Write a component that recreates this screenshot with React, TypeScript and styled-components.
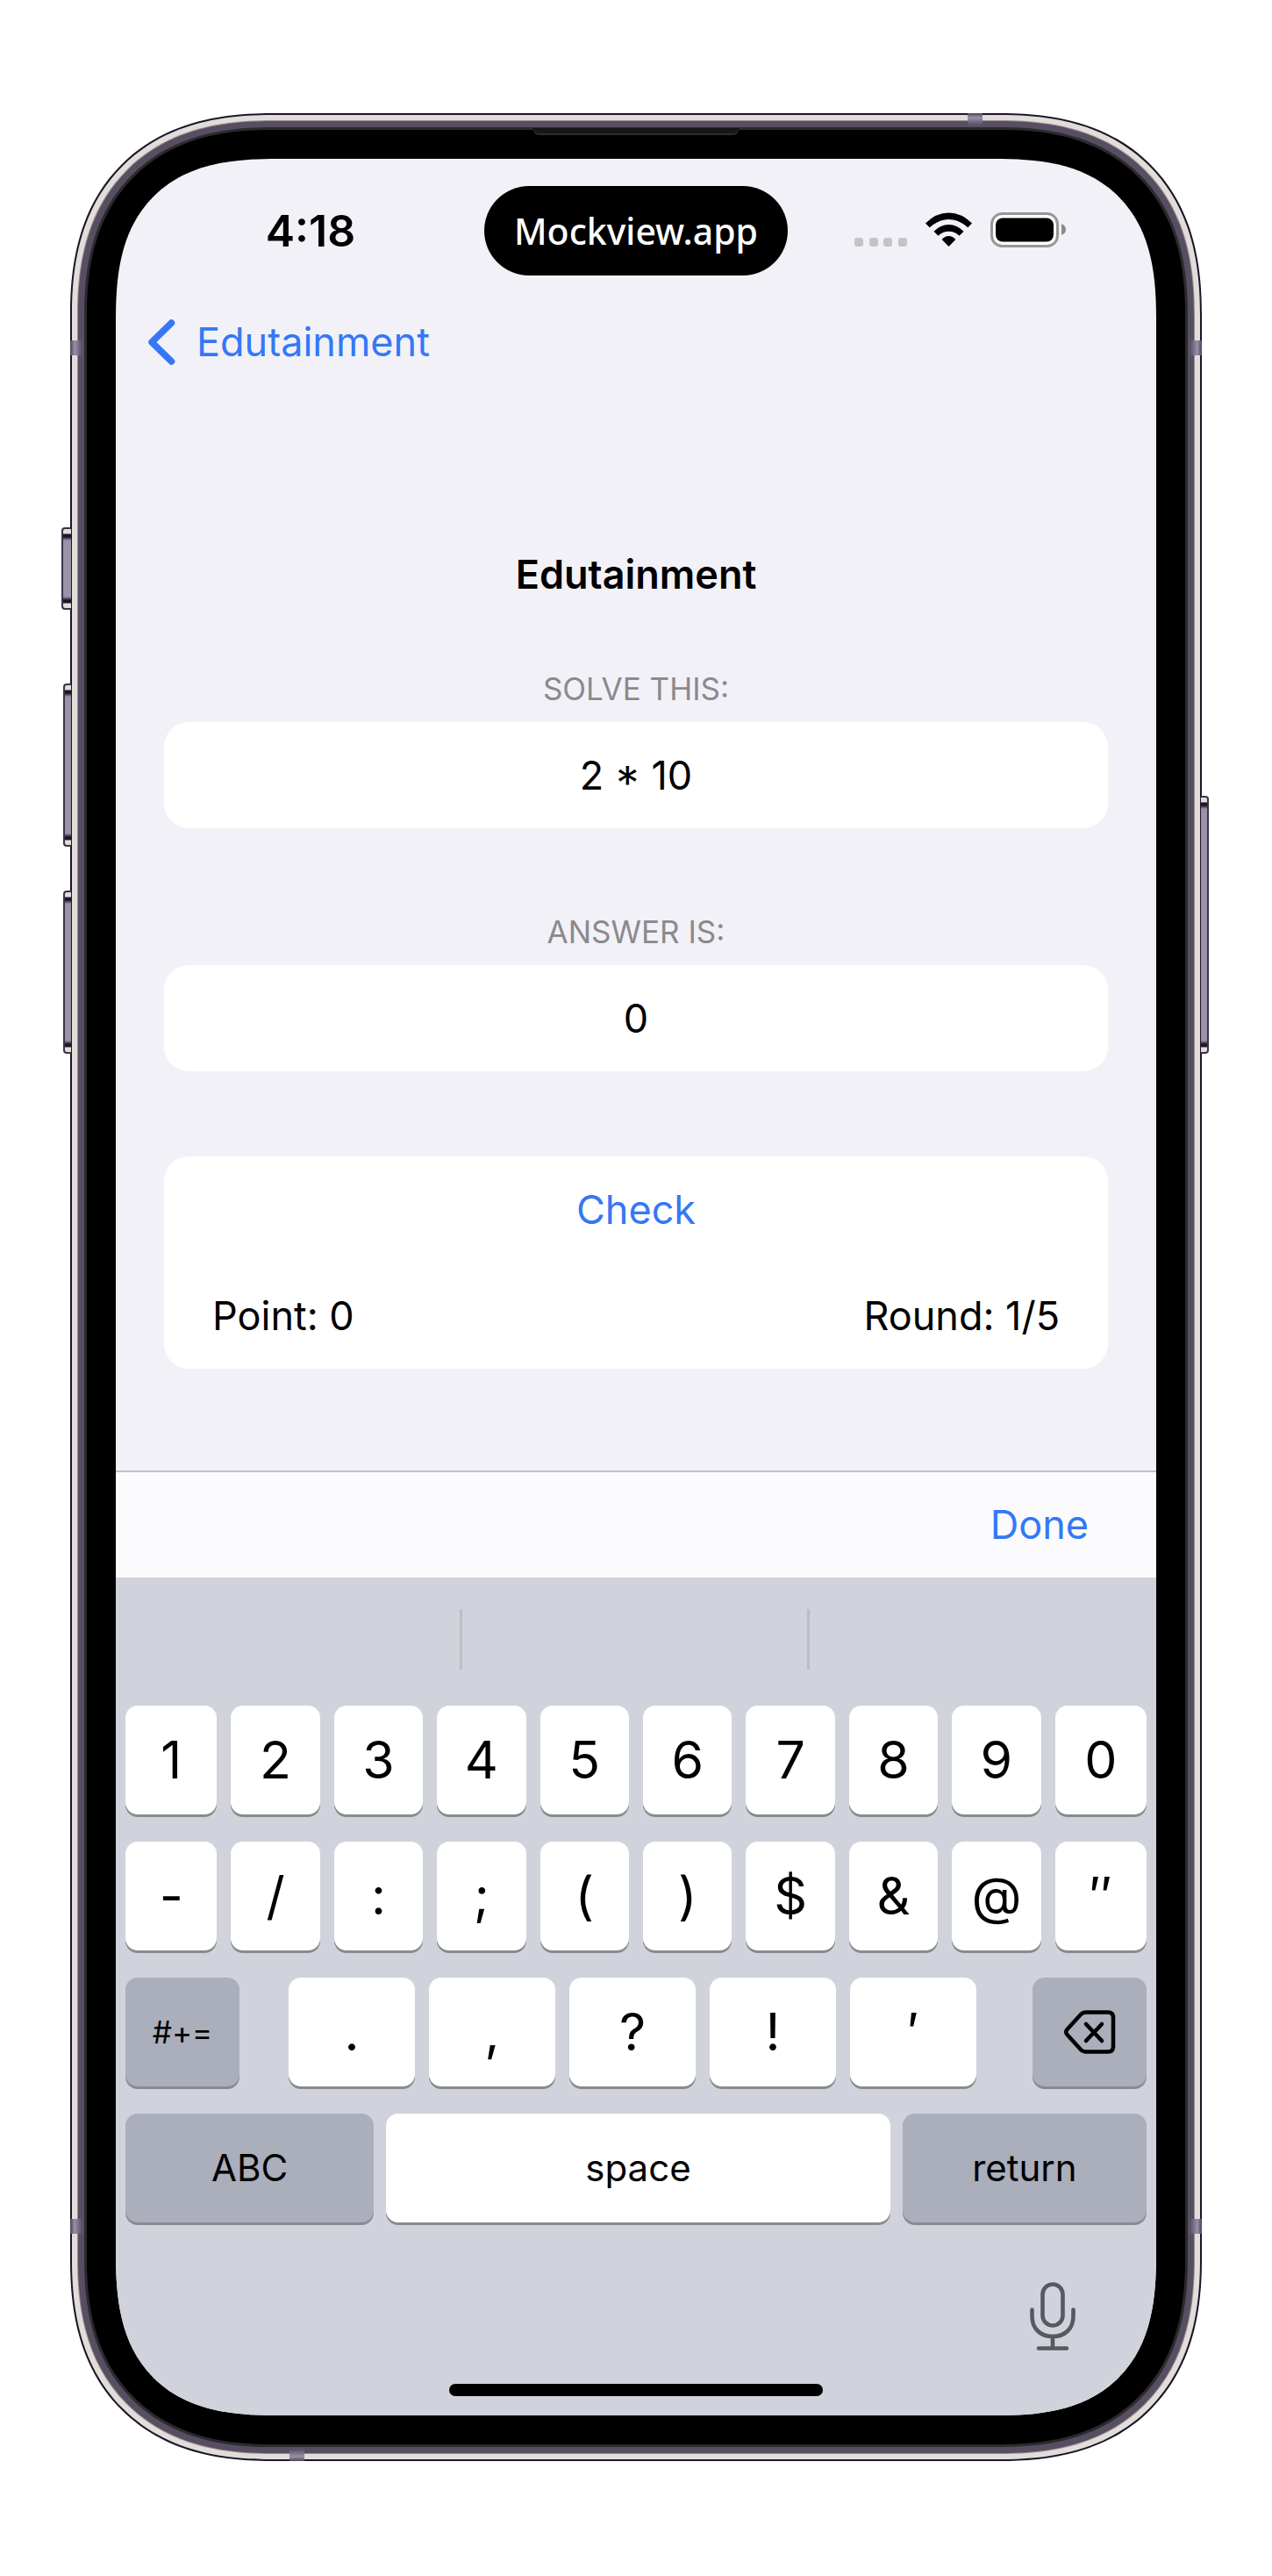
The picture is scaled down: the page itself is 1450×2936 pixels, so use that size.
import React, { useState } from "react";
import styled, { createGlobalStyle, css } from "styled-components";

const GlobalStyle = createGlobalStyle`
  *, *::before, *::after { box-sizing: border-box; }
  body {
    margin: 0;
    background: #ffffff;
    color: #000000;
    font-family: Inter, Roboto, "Liberation Sans", sans-serif;
    font-size: 45px;
    line-height: 56px;
  }
  button, input { font: inherit; color: inherit; }
`;

const Page = styled.main`
  display: flex;
  justify-content: center;
  padding: 129px 80px 130px;
`;

const Phone = styled.div`
  position: relative;
  width: 100%;
  max-width: 1290px;
`;

/* One metal or glass layer of the case; layers nest from the outside in. */
const Layer = styled.div<{ $color: string; $width: number; $radius: number }>`
  padding: ${(p) => p.$width}px;
  background: ${(p) => p.$color};
  border-radius: ${(p) => p.$radius - 25}px;

  @supports (corner-shape: superellipse(1.2)) {
    border-radius: ${(p) => p.$radius}px;
    corner-shape: superellipse(1.24);
  }
`;

const SideButton = styled.span<{ $side: "left" | "right"; $top: number; $height: number; $depth: number }>`
  position: absolute;
  ${(p) => p.$side}: ${(p) => -p.$depth}px;
  top: ${(p) => p.$top}px;
  width: ${(p) => p.$depth + 1}px;
  height: ${(p) => p.$height}px;
  border: 2px solid #3b3446;
  border-${(p) => (p.$side === "left" ? "right" : "left")}-width: 0;
  border-radius: ${(p) => (p.$side === "left" ? "4px 0 0 4px" : "0 4px 4px 0")};
  background: linear-gradient(#e0dddb 5px, #1d1527 6px, #1d1527 9px, #9a93a8 13px, #9a93a8 calc(100% - 13px), #1d1527 calc(100% - 9px), #1d1527 calc(100% - 6px), #e0dddb calc(100% - 5px));
`;

const Antenna = styled.span<{ $edge: "left" | "right" | "top" | "bottom"; $at: string }>`
  position: absolute;
  ${(p) => p.$edge}: 0;
  background: linear-gradient(
    to ${(p) => ({ left: "right", right: "left", top: "bottom", bottom: "top" })[p.$edge]},
    #4a4257, #9a92a6 5px, #7b7289 9px, #5c5368 13px, #574e62
  );
  ${(p) =>
    p.$edge === "left" || p.$edge === "right"
      ? css`top: ${p.$at}; width: 16px; height: 17px;`
      : css`left: ${p.$at}; width: 17px; height: 16px;`}
`;

const Earpiece = styled.span`
  position: absolute;
  top: 17px;
  left: 50%;
  width: 236px;
  height: 8px;
  margin-left: -118px;
  border-bottom: 2px solid #2c2c2e;
  border-radius: 0 0 8px 8px;
  background: #161617;
`;

const Screen = styled.div`
  display: flex;
  flex-direction: column;
  overflow: hidden;
  background: #f2f1f7;
  border-radius: 152px;

  @supports (corner-shape: superellipse(1.2)) {
    border-radius: 185px;
    corner-shape: superellipse(1.39);
  }
`;

const StatusBar = styled.header`
  display: grid;
  grid-template-columns: 1fr 346px 1fr;
  align-items: center;
  padding-top: 31px;
`;

const Clock = styled.time`
  padding-left: 24px;
  text-align: center;
  font-size: 50px;
  font-weight: 600;
`;

const Island = styled.div`
  display: flex;
  align-items: center;
  justify-content: center;
  height: 102px;
  border-radius: 51px;
  background: #000000;
  color: #ffffff;
  font-family: "Noto Sans", "Open Sans", sans-serif;
  font-size: 41px;
  font-weight: 500;
`;

const StatusIcons = styled.div`
  display: flex;
  align-items: center;
  justify-content: flex-end;
  padding-right: 102px;
`;

const NavBar = styled.nav`
  display: flex;
  padding: 44px 36px 0;
`;

const BackLink = styled.a`
  display: flex;
  align-items: center;
  gap: 24px;
  height: 64px;
  color: #3478f6;
  text-decoration: none;
`;

const Form = styled.form`
  display: flex;
  flex-direction: column;
  padding: 205px 55px 116px;
`;

const Title = styled.h1`
  margin: 0 0 80px;
  text-align: center;
  font-size: 45px;
  font-weight: 600;
  line-height: 56px;
`;

const Caption = styled.label`
  display: block;
  margin-bottom: 16px;
  color: #8a8a8e;
  text-align: center;
  text-transform: uppercase;
  font-size: 35px;
  line-height: 44px;
`;

const Question = styled.output`
  display: flex;
  align-items: center;
  justify-content: center;
  height: 121px;
  margin-bottom: 96px;
  border-radius: 28px;
  background: #ffffff;
`;

const Answer = styled.input`
  width: 100%;
  height: 121px;
  margin: 0 0 97px;
  padding: 0;
  border: 0;
  outline: 0;
  border-radius: 28px;
  background: #ffffff;
  text-align: center;
`;

const Card = styled.section`
  border-radius: 28px;
  background: #ffffff;
`;

const TextButton = styled.button`
  padding: 0;
  border: 0;
  background: none;
  color: #3478f6;
  cursor: pointer;
`;

const CheckButton = styled(TextButton)`
  display: block;
  width: 100%;
  height: 121px;
`;

const Score = styled.div`
  display: flex;
  align-items: center;
  justify-content: space-between;
  height: 121px;
  padding: 0 55px;
`;

const Toolbar = styled.div`
  display: flex;
  align-items: center;
  justify-content: flex-end;
  height: 122px;
  padding: 0 77px;
  border-top: 2px solid #c0c0c5;
  background: #fbfbfd;
`;

const Keyboard = styled.section`
  padding-bottom: 22px;
  background: #d0d3db;
`;

const Suggestions = styled.div`
  display: grid;
  grid-template-columns: repeat(3, 1fr);
  padding: 36px 0 41px;
`;

const Suggestion = styled.span`
  height: 69px;
  &:not(:last-child) { border-right: 3px solid #bdbec3; }
`;

const Keys = styled.div`
  display: grid;
  gap: 31px;
  padding: 0 11px;
`;

const KeyRow = styled.div<{ $columns: string; $gap: number }>`
  display: grid;
  grid-template-columns: ${(p) => p.$columns};
  column-gap: ${(p) => p.$gap}px;
`;

const PunctuationKeys = styled.div`
  display: grid;
  grid-template-columns: repeat(5, 1fr);
  column-gap: 16px;
  margin: 0 64px 0 56px;
`;

const Key = styled.button<{ $tone?: "light" | "dark"; $size?: number }>`
  display: flex;
  align-items: center;
  justify-content: center;
  min-width: 0;
  height: 124px;
  padding: 0;
  border: 0;
  border-radius: 14px;
  background: ${(p) => (p.$tone === "dark" ? "#abaebb" : "#ffffff")};
  box-shadow: 0 3px 0 #898a8e;
  font-size: ${(p) => p.$size ?? 59}px;
  line-height: 72px;
  cursor: pointer;
`;

const Dictation = styled.div`
  display: flex;
  justify-content: flex-end;
  padding: 68px 91px 38px;
`;

const IconButton = styled.button`
  display: flex;
  padding: 0;
  border: 0;
  background: none;
  color: #555960;
`;

const HomeIndicator = styled.div`
  width: 36%;
  height: 14px;
  margin: 0 auto;
  border-radius: 7px;
  background: #000000;
`;

const StatusGlyphs = () => (
  <svg width="242" height="42" viewBox="0 0 242 42" aria-hidden="true">
    <g fill="#c4c4c8">
      <rect x="0" y="29" width="10" height="10" rx="3" />
      <rect x="17" y="29" width="10" height="10" rx="3" />
      <rect x="33" y="29" width="10" height="10" rx="3" />
      <rect x="50" y="29" width="10" height="10" rx="3" />
    </g>
    <path d="M81 12.500 Q93 0.500 107.500 0.500 T134 12.500 L129.300 17.300 Q119 8 107.500 8 T85.700 17.300 Z" />
    <path d="M90.500 21.800 Q98 14 107.500 14 T124.500 21.800 L119.500 26.700 Q114.500 21.800 107.500 21.800 T95.500 26.700 Z" />
    <path d="M99.700 31 Q103 27 107.500 27 T115.300 31 L107.500 39 Z" />
    <rect x="156.500" y="1.500" width="75" height="37" rx="12" fill="#fff" stroke="#979797" strokeWidth="3" />
    <rect x="161" y="6.500" width="66" height="27" rx="8" />
    <path d="M236 13 Q241 15 241 19.500 T236 26 Z" fill="#8b8b8b" />
  </svg>
);

const ChevronIcon = () => (
  <svg width="32" height="54" viewBox="0 0 32 54" fill="none" stroke="currentColor" strokeWidth="7.500" strokeLinecap="round" strokeLinejoin="round" aria-hidden="true">
    <path d="M27.500 5 L5 27 L27.500 49" />
  </svg>
);

const DeleteIcon = () => (
  <svg width="60" height="52" viewBox="0 0 60 52" fill="none" stroke="#000" strokeWidth="4.500" strokeLinecap="round" strokeLinejoin="round" aria-hidden="true">
    <path d="M26 3.500 H51 Q57 3.500 57 9.500 V42.500 Q57 48.500 51 48.500 H26 Q22.500 48.500 20 46 L4.500 29 Q2 26 4.500 23 L20 6 Q22.500 3.500 26 3.500 Z" />
    <path d="M26 17 L44 36 M44 17 L26 36" />
  </svg>
);

const MicIcon = () => (
  <svg width="54" height="78" viewBox="0 0 54 78" fill="none" stroke="currentColor" strokeWidth="4.600" strokeLinecap="round" aria-hidden="true">
    <rect x="15.500" y="2.500" width="23" height="47" rx="11.500" />
    <path d="M3.500 31.500 V39 C3.500 53 13 62 27 62 S50.500 53 50.500 39 V31.500" />
    <path d="M27 62 V75 M11 75.500 H43" />
  </svg>
);

const Case = ({ children }: { children: React.ReactNode }) => (
  <Layer $color="#1d1527" $width={2} $radius={230}>
    <Layer $color="#e0dddb" $width={6} $radius={228}>
      <Layer $color="#a08f8c" $width={1} $radius={222}>
        <Layer $color="#574e62" $width={7} $radius={221}>
          <Layer $color="#2b2a2d" $width={3} $radius={214}>
            <Layer $color="#000000" $width={33} $radius={211}>
              {children}
            </Layer>
          </Layer>
        </Layer>
      </Layer>
    </Layer>
  </Layer>
);

const wideRow = "104fr repeat(8, 101fr) 104fr";
const digits = ["1", "2", "3", "4", "5", "6", "7", "8", "9", "0"];
const symbols = ["-", "/", ":", ";", "(", ")", "$", "&", "@", "″"];
const punctuation = [".", ",", "?", "!", "′"];

export default function App() {
  const [answer, setAnswer] = useState("0");

  return (
    <>
      <GlobalStyle />
      <Page>
        <Phone>
          <SideButton $side="left" $top={472} $height={94} $depth={10} />
          <SideButton $side="left" $top={650} $height={186} $depth={8} />
          <SideButton $side="left" $top={886} $height={186} $depth={8} />
          <SideButton $side="right" $top={778} $height={294} $depth={8} />
          <Case>
            <Screen>
              <StatusBar>
                <Clock>4:18</Clock>
                <Island>Mockview.app</Island>
                <StatusIcons>
                  <StatusGlyphs />
                </StatusIcons>
              </StatusBar>
              <NavBar>
                <BackLink href="#">
                  <ChevronIcon />
                  Edutainment
                </BackLink>
              </NavBar>
              <Form onSubmit={(e) => e.preventDefault()}>
                <Title>Edutainment</Title>
                <Caption htmlFor="question">Solve this:</Caption>
                <Question id="question">2 * 10</Question>
                <Caption htmlFor="answer">Answer is:</Caption>
                <Answer id="answer" inputMode="numeric" value={answer} onChange={(e) => setAnswer(e.target.value)} />
                <Card>
                  <CheckButton type="submit">Check</CheckButton>
                  <Score>
                    <span>Point: 0</span>
                    <span>Round: 1/5</span>
                  </Score>
                </Card>
              </Form>
              <Toolbar>
                <TextButton type="button">Done</TextButton>
              </Toolbar>
              <Keyboard aria-label="Keyboard">
                <Suggestions>
                  <Suggestion />
                  <Suggestion />
                  <Suggestion />
                </Suggestions>
                <Keys>
                  <KeyRow $columns={wideRow} $gap={16}>
                    {digits.map((k) => (
                      <Key key={k} type="button">{k}</Key>
                    ))}
                  </KeyRow>
                  <KeyRow $columns={wideRow} $gap={16}>
                    {symbols.map((k) => (
                      <Key key={k} type="button">{k}</Key>
                    ))}
                  </KeyRow>
                  <KeyRow $columns="130px 1fr 130px" $gap={0}>
                    <Key type="button" $tone="dark" $size={35}>#+=</Key>
                    <PunctuationKeys>
                      {punctuation.map((k) => (
                        <Key key={k} type="button">{k}</Key>
                      ))}
                    </PunctuationKeys>
                    <Key type="button" $tone="dark" aria-label="Delete">
                      <DeleteIcon />
                    </Key>
                  </KeyRow>
                  <KeyRow $columns="283fr 574fr 278fr" $gap={14}>
                    <Key type="button" $tone="dark" $size={42}>ABC</Key>
                    <Key type="button" $size={42}>space</Key>
                    <Key type="button" $tone="dark" $size={42}>return</Key>
                  </KeyRow>
                </Keys>
                <Dictation>
                  <IconButton type="button" aria-label="Dictate">
                    <MicIcon />
                  </IconButton>
                </Dictation>
                <HomeIndicator />
              </Keyboard>
            </Screen>
          </Case>
          <Antenna $edge="left" $at="259px" />
          <Antenna $edge="right" $at="259px" />
          <Antenna $edge="left" $at="calc(100% - 276px)" />
          <Antenna $edge="right" $at="calc(100% - 276px)" />
          <Antenna $edge="top" $at="calc(100% - 267px)" />
          <Antenna $edge="bottom" $at="250px" />
          <Earpiece />
        </Phone>
      </Page>
    </>
  );
}
